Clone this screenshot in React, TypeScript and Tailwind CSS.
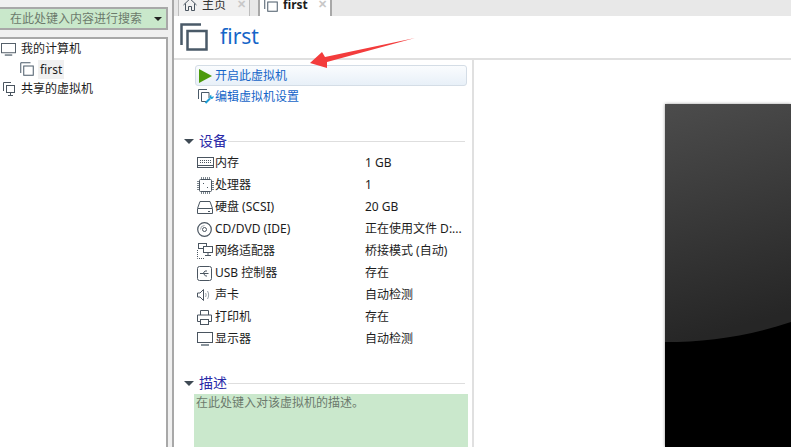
const font = "font-['Noto_Sans','Noto_Sans_CJK_SC',sans-serif]";

const VmIcon = ({ size = 14, stroke = 2 }: { size?: number; stroke?: number }) => (
  <svg width={size} height={size} viewBox="0 0 28 28" fill="none" stroke="#4a5a68" strokeWidth={stroke}>
    <path d="M21 1.500H1.500V22" />
    <rect x="7.500" y="8" width="19" height="18.500" />
  </svg>
);

const MemoryIcon = () => (
  <svg width="17" height="12" viewBox="0 0 17 12" fill="none" stroke="#4a5560">
    <rect x="0.500" y="0.500" width="16" height="10" />
    <path d="M3 3.500h11M3 5.500h11" strokeDasharray="1 1" />
    <path d="M1 8.500h15" />
  </svg>
);

const CpuIcon = () => (
  <svg width="17" height="17" viewBox="0 0 17 17" fill="none" stroke="#4a5560">
    <rect x="2.500" y="2.500" width="12" height="12" rx="1" />
    <path d="M0 4.500h2M0 6.500h2M0 8.500h2M0 10.500h2M0 12.500h2M15 4.500h2M15 6.500h2M15 8.500h2M15 10.500h2M15 12.500h2M4.500 0v2M6.500 0v2M8.500 0v2M10.500 0v2M12.500 0v2M4.500 15v2M6.500 15v2M8.500 15v2M10.500 15v2M12.500 15v2" stroke="#7d878f" />
    <path d="M6 6h1v1H6zM10 10h1v1h-1z" fill="#4a5560" stroke="none" />
  </svg>
);

const DiskIcon = () => (
  <svg width="16" height="13" viewBox="0 0 16 13" fill="none" stroke="#4a5560">
    <path d="M3 .500h10l2.500 7v5H.500v-5z" />
    <path d="M1 7.500h14" />
    <path d="M11 10.500h2" />
  </svg>
);

const CdIcon = () => (
  <svg width="15" height="15" viewBox="0 0 15 15" fill="none" stroke="#4a5560">
    <circle cx="7.500" cy="7.500" r="6.800" strokeWidth="1.200" />
    <circle cx="7.500" cy="7.500" r="2" />
    <path d="M3.500 7.500a4 4 0 0 1 4-4" stroke="#a0a8ae" />
  </svg>
);

const NetIcon = () => (
  <svg width="16" height="16" viewBox="0 0 16 16" fill="none" stroke="#4a5560">
    <rect x="1.500" y="0.500" width="8" height="5" />
    <rect x="6.500" y="3.500" width="9" height="6" fill="#fff" />
    <path d="M11 9.500v3M8 12.500h6" />
    <path d="M.500 7v8.500H8" strokeDasharray="1 1" />
  </svg>
);

const UsbIcon = () => (
  <svg width="15" height="15" viewBox="0 0 15 15" fill="none" stroke="#4a5560">
    <rect x="0.500" y="0.500" width="14" height="14" rx="2" />
    <path d="M3 7.500h8.500M6 7.500l2-2.500h2M6.500 7.500l2 2.500h1.500" />
  </svg>
);

const SoundIcon = () => (
  <svg width="14" height="14" viewBox="0 0 14 14" fill="none" stroke="#4a5560">
    <path d="M.500 5v4h2.500l3.500 3.500v-11L3 5z" />
    <path d="M8.500 5c.8 1.200.8 2.800 0 4M10.500 3c1.500 2.500 1.500 5.500 0 8" stroke="#9aa3aa" />
  </svg>
);

const PrinterIcon = () => (
  <svg width="15" height="15" viewBox="0 0 15 15" fill="none" stroke="#4a5560">
    <path d="M3.500 5V.500h8V5M3.500 11.500h-3v-6.500h14v6.500h-3" />
    <rect x="3.500" y="9.500" width="8" height="5" />
  </svg>
);

const MonitorIcon = ({ w = 16, h = 14 }: { w?: number; h?: number }) => (
  <svg width={w} height={h} viewBox="0 0 16 14" fill="none" stroke="#4a5560">
    <rect x="0.500" y="0.500" width="15" height="10" />
    <path d="M4 13h8" strokeWidth="2" stroke="#8a949c" />
  </svg>
);

const SharedIcon = () => (
  <svg width="13" height="14" viewBox="0 0 13 14" fill="none" stroke="#4a5560">
    <path d="M8 .500H.500V9" />
    <rect x="3.500" y="3.500" width="8" height="7" />
    <path d="M7.500 10.500v2.500M5 13.500h5" />
  </svg>
);

const HomeIcon = () => (
  <svg width="14" height="13" viewBox="0 0 14 13" fill="none" stroke="#4a5560">
    <path d="M.500 7 7 .800 13.500 7M2.500 5.500v7h3v-4h3v4h3v-7" />
  </svg>
);

const EditIcon = () => (
  <svg width="16" height="15" viewBox="0 0 16 15" fill="none">
    <path d="M9 .500H.500V10" stroke="#4a5a68" />
    <path d="M11 9V3.500H3.500v9H8" stroke="#4a5a68" />
    <path d="M7.500 14 12 9.500" stroke="#1a9fd8" strokeWidth="2" />
    <path d="M12 6.500a2.300 2.300 0 0 0 1.500 3.500 2.300 2.300 0 0 0 2-3l-1.500 1-1-1 .8-1.300z" fill="#1a9fd8" />
  </svg>
);

const devices: { icon: React.ReactNode; name: string; value: string }[] = [
  { icon: <MemoryIcon />, name: "内存", value: "1 GB" },
  { icon: <CpuIcon />, name: "处理器", value: "1" },
  { icon: <DiskIcon />, name: "硬盘 (SCSI)", value: "20 GB" },
  { icon: <CdIcon />, name: "CD/DVD (IDE)", value: "正在使用文件 D:..." },
  { icon: <NetIcon />, name: "网络适配器", value: "桥接模式 (自动)" },
  { icon: <UsbIcon />, name: "USB 控制器", value: "存在" },
  { icon: <SoundIcon />, name: "声卡", value: "自动检测" },
  { icon: <PrinterIcon />, name: "打印机", value: "存在" },
  { icon: <MonitorIcon />, name: "显示器", value: "自动检测" },
];

const SectionTitle = ({ title }: { title: string }) => (
  <div className="flex h-5 items-center pl-[10px]">
    <span className="h-0 w-0 border-x-[5px] border-t-[5px] border-x-transparent border-t-[#3f4a54]" />
    <span className="ml-[5px] text-[14px] leading-5 text-[#2a2aa8]">{title}</span>
    <span className="ml-px mr-[7px] h-px flex-1 bg-[#dedede]" />
  </div>
);

export default function App() {
  return (
    <div className={`${font} relative flex h-[447px] w-[791px] overflow-hidden bg-[#f0f0f0] text-[12px] text-[#1c1c1c]`}>
      <aside className="flex w-[168px] shrink-0 flex-col">
        <div className="mt-[7px] flex h-[23px] items-center border-y-2 border-r-2 border-[#a8a8a8] bg-[#c9e8cb] pl-[10px] pr-[4px]">
          <span className="flex-1 text-[#6c7a6c]">在此处键入内容进行搜索</span>
          <span className="h-0 w-0 border-x-[4px] border-t-[4px] border-x-transparent border-t-[#222]" />
        </div>
        <div className="mt-[7px] flex-1 border-t-2 border-r-2 border-[#a8a8a8] bg-white">
          <div className="flex h-[20px] items-center pl-px">
            <MonitorIcon w={15} h={13} />
            <span className="ml-[5px]">我的计算机</span>
          </div>
          <div className="flex h-[20px] items-center pl-[20px]">
            <VmIcon size={14} />
            <span className="ml-[4px] bg-[#f0f0f0] px-[2px] leading-[19px]">first</span>
          </div>
          <div className="flex h-[20px] items-center pl-[3px]">
            <SharedIcon />
            <span className="ml-[5px]">共享的虚拟机</span>
          </div>
        </div>
      </aside>
      <main className="ml-[4px] flex min-w-0 flex-1 flex-col border-l-2 border-[#a8a8a8]">
        <div className="flex h-[16px] shrink-0 bg-[#e8e8e8]">
          <div className="ml-[4px] flex h-[16px] w-[72px] items-center overflow-hidden border-x border-[#bdbdbd] bg-[#f0f0f0] pb-[7px] pl-[4px]">
            <HomeIcon />
            <span className="ml-[5px] text-[#333]">主页</span>
            <span className="ml-[11px] text-[11px] font-bold text-[#c8c8c8]">✕</span>
          </div>
          <div className="ml-[8px] flex h-[16px] w-[74px] items-center overflow-hidden border-x-2 border-[#a8a8a8] bg-white pb-[7px] pl-[4px]">
            <VmIcon size={14} />
            <span className="ml-[5px] font-bold">first</span>
            <span className="ml-[10px] text-[11px] font-bold text-[#c8c8c8]">✕</span>
          </div>
        </div>
        <header className="flex h-[44px] shrink-0 items-center border-b-2 border-[#e0e0e0] bg-white pl-[6px]">
          <VmIcon size={28} stroke={2.500} />
          <span className="mb-[2px] ml-[12px] text-[21px] leading-7 text-[#1565c8]">first</span>
        </header>
        <div className="flex min-h-0 flex-1 bg-white">
          <section className="flex w-[300px] shrink-0 flex-col border-r-2 border-[#e0e0e0]">
            <div className="ml-[21px] mr-[5px] mt-[5px] flex h-[21px] items-center rounded-[3px] border border-[#d4dde6] bg-gradient-to-b from-[#fafcfe] to-[#e8f0f8] pl-[3px] text-[#1565c8]">
              <span className="h-0 w-0 border-y-[7px] border-l-[13px] border-y-transparent border-l-[#4c9a0c]" />
              <span className="ml-[3px]">开启此虚拟机</span>
            </div>
            <div className="ml-[24px] flex h-[21px] items-center text-[#1565c8]">
              <EditIcon />
              <span className="ml-px">编辑虚拟机设置</span>
            </div>
            <div className="mt-[24px]">
              <SectionTitle title="设备" />
            </div>
            <div className="mt-[1px] flex flex-col">
              {devices.map((d) => (
                <div key={d.name} className="flex h-[22px] items-center">
                  <div className="ml-[23px] flex w-[168px] items-center">
                    <span className="flex w-[18px] justify-start">{d.icon}</span>
                    <span>{d.name}</span>
                  </div>
                  <span>{d.value}</span>
                </div>
              ))}
            </div>
            <div className="mt-[23px]">
              <SectionTitle title="描述" />
            </div>
            <div className="ml-[20px] mr-[4px] mt-[1px] flex-1 bg-[#cae8cc] pl-[2px] leading-[18px] text-[#6c7a6c]">
              在此处键入对该虚拟机的描述。
            </div>
          </section>
          <section className="flex-1 pl-[191px] pt-[44px]">
            <div className="relative h-full w-full overflow-hidden bg-black shadow-[0_0_3px_rgba(0,0,0,0.4)]">
              <svg width="126" height="344" viewBox="0 0 126 344" className="block">
                <defs>
                  <linearGradient id="glass" x1="0" y1="0" x2="0.15" y2="1">
                    <stop offset="0" stopColor="#4c4c4c" />
                    <stop offset="1" stopColor="#262626" />
                  </linearGradient>
                </defs>
                <path d="M0 0H126V218C84 232 42 238 0 238Z" fill="url(#glass)" />
              </svg>
            </div>
          </section>
        </div>
      </main>
      <svg className="absolute left-[305px] top-[34px]" width="112" height="36" viewBox="0 0 112 36">
        <path d="M5 29 17 18l3 5L110 4 22 28v6z" fill="#f33c3c" />
      </svg>
    </div>
  );
}
